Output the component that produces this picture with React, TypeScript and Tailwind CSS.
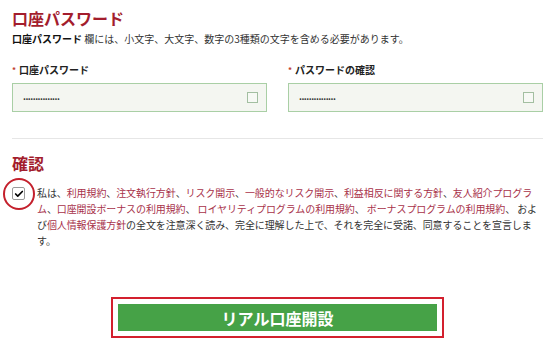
import { Check } from "lucide-react";

const font = { fontFamily: '"Noto Sans CJK JP", "Noto Sans", sans-serif' };

function PasswordField({ label }: { label: string }) {
  return (
    <div className="flex-1">
      <div className="flex items-center text-[10px] leading-[14px] font-bold text-[#222]">
        <span className="text-[#c0392b] text-[8px] mr-[3px]">*</span>
        {label}
      </div>
      <div className="mt-[6px] h-[29px] border border-[#a9cfa5] bg-[#f4f6f1] flex items-center justify-between pl-[10px] pr-[8px]">
        <span className="text-[9px] font-bold tracking-[-0.5px] text-[#333] leading-none pb-[3px]">...............</span>
        <span className="w-[11px] h-[11px] border border-[#a3bfa1] bg-[#f7f9f5]" />
      </div>
    </div>
  );
}

export default function App() {
  const link = "text-[#a8324a]";
  return (
    <div className="w-[555px] h-[342px] bg-white px-3 text-[#333]" style={font}>
      {/* 口座パスワード */}
      <h2 className="pt-[10px] text-[16px] leading-[16px] font-bold text-[#a31d2d]">口座パスワード</h2>
      <p className="mt-[6px] text-[10px] leading-[14px]">
        <span className="font-bold text-[#111]">口座パスワード</span> 欄には、小文字、大文字、数字の3種類の文字を含める必要があります。
      </p>

      <div className="mt-[17px] flex gap-[21px]">
        <PasswordField label="口座パスワード" />
        <PasswordField label="パスワードの確認" />
      </div>

      <div className="mt-[26px] border-t border-[#e6e6e6]" />

      {/* 確認 */}
      <h2 className="mt-[16px] text-[16px] leading-[16px] font-bold text-[#a31d2d]">確認</h2>
      <div className="mt-[14px] flex">
        <div className="relative w-[25px] shrink-0">
          <div className="mt-[2px] w-[13px] h-[13px] border border-[#9a9a9a] rounded-[2px] bg-white flex items-center justify-center">
            <Check className="w-[10px] h-[10px] text-black" strokeWidth={4} />
          </div>
          <div className="absolute left-[-9px] top-[-7px] w-[32px] h-[32px] rounded-full border-2 border-[#c4202c]" />
        </div>
        <p className="whitespace-nowrap text-[10px] leading-[16px] tracking-[-0.1px]">
          私は、<span className={link}>利用規約</span>、<span className={link}>注文執行方針</span>、<span className={link}>リスク開示</span>、<span className={link}>一般的なリスク開示</span>、<span className={link}>利益相反に関する方針</span>、<span className={link}>友人紹介プログラ</span>
          <br />
          <span className={link}>ム</span>、<span className={link}>口座開設ボーナスの利用規約</span>、 <span className={link}>ロイヤリティプログラムの利用規約</span>、 <span className={link}>ボーナスプログラムの利用規約</span>、 およ
          <br />
          び<span className={link}>個人情報保護方針</span>の全文を注意深く読み、完全に理解した上で、それを完全に受諾、同意することを宣言しま
          <br />
          す。
        </p>
      </div>

      <div className="mt-[48px] flex justify-center">
        <div className="border-2 border-[#d3202e] p-[5px]">
          <button className="w-[319px] h-[27px] bg-[#46a247] text-white text-[16px] font-bold leading-none">
            リアル口座開設
          </button>
        </div>
      </div>
    </div>
  );
}
